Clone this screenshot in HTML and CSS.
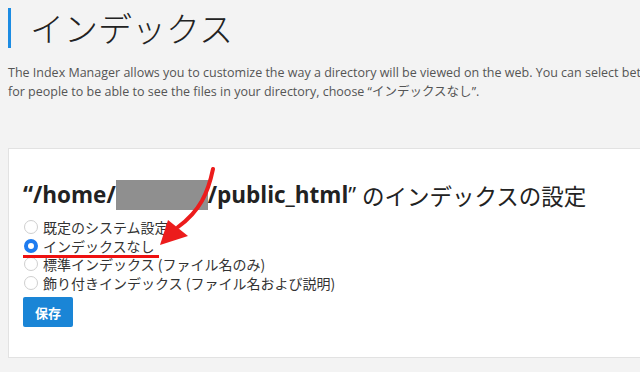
FILE: index.html
```html
<!DOCTYPE html>
<html lang="ja">
<head>
    <meta charset="UTF-8">
    <title>インデックス</title>
    <link rel="stylesheet" href="styles.css">
</head>
<body>
    <div class="pagina">
        <h1 class="titulo">インデックス</h1>
        <p class="descripcion">The Index Manager allows you to customize the way a directory will be viewed on the web. You can select between<br>for people to be able to see the files in your directory, choose “<span class="jp">インデックスなし</span>”.</p>

        <div class="tarjeta">
            <h2 class="ruta"><b>“/home/</b><span class="oculto"></span><b>/public_html</b>” <span class="jp">のインデックスの設定</span></h2>
            <form class="opciones">
                <label class="opcion"><input type="radio" name="idx"> 既定のシステム設定</label>
                <label class="opcion marcada"><input type="radio" name="idx" checked> インデックスなし</label>
                <label class="opcion"><input type="radio" name="idx"> 標準インデックス (ファイル名のみ)</label>
                <label class="opcion"><input type="radio" name="idx"> 飾り付きインデックス (ファイル名および説明)</label>
                <button type="button" class="boton">保存</button>
            </form>

            <!-- flecha roja encima -->
            <svg class="flecha" width="80" height="100" viewBox="0 0 80 100">
                <path d="M63 2 C58 26 50 44 28 60" stroke="#ec1c1c" stroke-width="4" fill="none" stroke-linecap="round"/>
                <polygon points="10,78 18,53 38,69" fill="#ec1c1c"/>
            </svg>
        </div>
    </div>
</body>
</html>
```

FILE: styles.css
```css
body {
    margin: 0;
    background: #f3f3f3;
    color: #333;
    font-family: "Open Sans", "Noto Sans CJK JP", sans-serif;
    overflow: hidden;
}
.pagina {
    padding: 8px 0 0 8px;
    width: 1000px;
}
.jp {
    font-family: "Noto Sans CJK JP", sans-serif;
}
.titulo {
    margin: 0;
    border-left: 3px solid #1c8ce3;
    padding-left: 19px;
    font-family: "Noto Sans CJK JP", sans-serif;
    font-weight: 300;
    font-size: 34px;
    line-height: 40px;
    color: #222;
}
.descripcion {
    margin: 16px 0 0 0;
    font-size: 12.5px;
    line-height: 18px;
    color: #555;
    white-space: nowrap;
}
.tarjeta {
    position: relative;
    margin-top: 47px;
    background: #fff;
    border: 1px solid #e2e2e2;
    padding: 31px 14px 28px 14px;
    height: 149px;
}
.ruta {
    margin: 0;
    font-size: 22.5px;
    font-weight: normal;
    line-height: 30px;
    color: #222;
    display: flex;
    align-items: center;
    white-space: pre;
}
.ruta b {
    font-weight: bold;
}
.oculto {
    display: inline-block;
    width: 92px;
    height: 30px;
    background: #8f8f8f;
}
.opciones {
    margin-top: 8px;
    display: flex;
    flex-direction: column;
    align-items: flex-start;
}
.opcion {
    display: flex;
    align-items: center;
    font-family: "Noto Sans CJK JP", sans-serif;
    font-size: 14px;
    line-height: 18.5px;
    color: #333;
}
.opcion input {
    appearance: none;
    margin: 0 5px 0 1px;
    width: 14px;
    height: 14px;
    border: 1px solid #cfcfcf;
    border-radius: 50%;
    background: #fff;
}
.opcion input:checked {
    border: 4px solid #1e7cf0;
    background: #fff;
}
.marcada {
    border-bottom: 3px solid #e11;
    margin-bottom: -3px;
    padding-right: 4px;
    position: relative;
    z-index: 1;
}
.boton {
    margin-top: 5px;
    background: #1a85d6;
    color: white;
    border: none;
    border-radius: 2px;
    padding: 0 12px;
    height: 30px;
    font-family: "Noto Sans CJK JP", sans-serif;
    font-weight: bold;
    font-size: 13px;
}
.flecha {
    position: absolute;
    left: 141px;
    top: 18px;
}
```
